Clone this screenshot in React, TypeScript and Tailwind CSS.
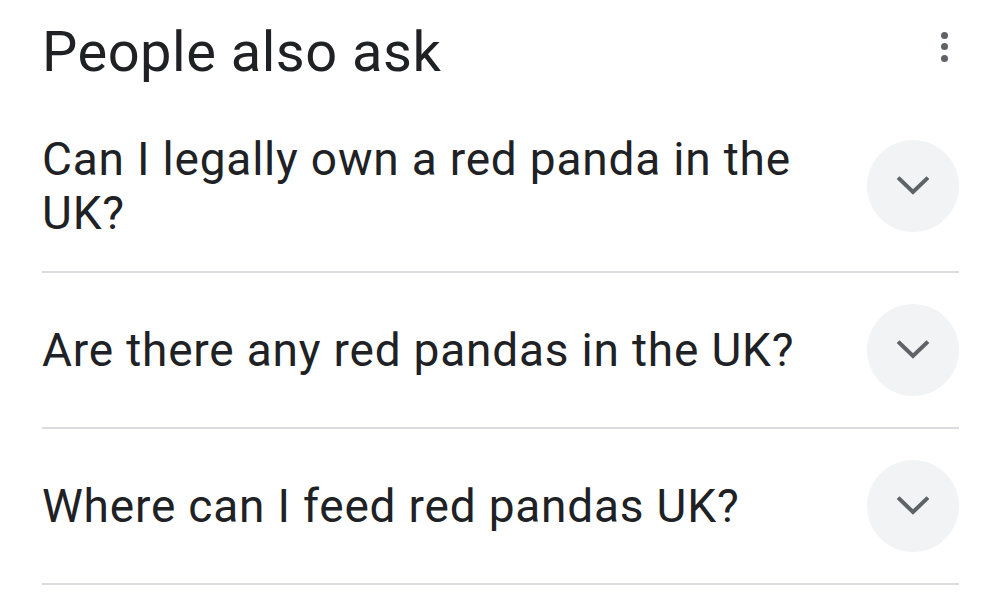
const questions = [
  "Can I legally own a red panda in the UK?",
  "Are there any red pandas in the UK?",
  "Where can I feed red pandas UK?",
];

function Chevron() {
  return (
    <svg className="w-[36px] h-[36px]" viewBox="0 0 36 36" fill="none" stroke="#5f6368" strokeWidth={4} strokeLinecap="square">
      <path d="M4.5 11 18 24 31.5 11" />
    </svg>
  );
}

export default function App() {
  return (
    <div className="w-[1000px] h-[596px] bg-white overflow-hidden font-['Roboto',sans-serif] text-[#202124]">
      <div className="pl-[42px] pr-[41px]">
        {/* Header */}
        <div className="flex items-start justify-between h-[101px]">
          <h2 className="text-[56px] leading-none pt-[24px] tracking-[0.5px]">People also ask</h2>
          <div className="flex flex-col gap-[4.5px] pt-[31.5px] pr-[11.5px]">
            <span className="w-[7px] h-[7px] rounded-full bg-[#5f6368]" />
            <span className="w-[7px] h-[7px] rounded-full bg-[#5f6368]" />
            <span className="w-[7px] h-[7px] rounded-full bg-[#5f6368]" />
          </div>
        </div>

        {/* Questions */}
        {questions.map((q) => (
          <div key={q} className="flex items-center justify-between py-[31px] border-b-2 border-[#dadce0]">
            <span className="text-[46px] leading-[54px] tracking-[0.8px] max-w-[790px]">{q}</span>
            <div className="w-[92px] h-[92px] rounded-full bg-[#f1f3f4] flex items-center justify-center shrink-0">
              <Chevron />
            </div>
          </div>
        ))}
      </div>
    </div>
  );
}
